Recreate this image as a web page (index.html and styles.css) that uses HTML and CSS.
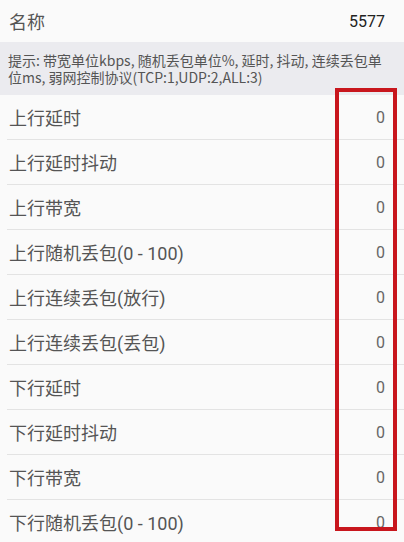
FILE: index.html
```html
<!DOCTYPE html>
<html lang="zh">
<head>
<meta charset="utf-8">
<link rel="stylesheet" href="styles.css">
</head>
<body>
<div class="page">
  <div class="top-row">
    <span class="top-label">名称</span>
    <span class="top-value">5577</span>
  </div>
  <div class="hint">提示: 带宽单位kbps, 随机丢包单位%, 延时, 抖动, 连续丢包单位ms, 弱网控制协议(TCP:1,UDP:2,ALL:3)</div>
  <div class="list">
    <div class="row"><span class="label">上行延时</span><span class="value">0</span></div>
    <div class="row"><span class="label">上行延时抖动</span><span class="value">0</span></div>
    <div class="row"><span class="label">上行带宽</span><span class="value">0</span></div>
    <div class="row"><span class="label">上行随机丢包(0 - 100)</span><span class="value">0</span></div>
    <div class="row"><span class="label">上行连续丢包(放行)</span><span class="value">0</span></div>
    <div class="row"><span class="label">上行连续丢包(丢包)</span><span class="value">0</span></div>
    <div class="row"><span class="label">下行延时</span><span class="value">0</span></div>
    <div class="row"><span class="label">下行延时抖动</span><span class="value">0</span></div>
    <div class="row"><span class="label">下行带宽</span><span class="value">0</span></div>
    <div class="row"><span class="label">下行随机丢包(0 - 100)</span><span class="value">0</span></div>
  </div>
  <div class="highlight"></div>
</div>
</body>
</html>
```
FILE: styles.css
```css
html, body {
  margin: 0;
  padding: 0;
  background: #fafafa;
}
body {
  font-family: Roboto, "Noto Sans CJK SC", sans-serif;
  width: 404px;
  height: 542px;
  overflow: hidden;
}
.page {
  position: relative;
}
.top-row {
  height: 42px;
  display: flex;
  align-items: center;
  justify-content: space-between;
  padding: 0 19px 0 9px;
}
.top-label {
  font-size: 18px;
  color: #555;
}
.top-value {
  font-size: 16px;
  color: #222;
}
.hint {
  height: 53px;
  box-sizing: border-box;
  background: #ebebef;
  color: #555;
  font-family: "Noto Sans CJK SC", sans-serif;
  font-size: 14px;
  line-height: 17px;
  padding: 10px 20px 0 8px;
}
.list {
  padding-left: 7px;
}
.row {
  height: 44px;
  border-bottom: 1px solid #e3e3e3;
  display: flex;
  align-items: center;
  justify-content: space-between;
  padding: 0 19px 0 2px;
}
.label {
  font-size: 18px;
  color: #555;
}
.value {
  font-size: 16px;
  color: #666;
}
.highlight {
  position: absolute;
  left: 335px;
  top: 88px;
  width: 54px;
  height: 435px;
  border: 4px solid #c8161d;
}
```
